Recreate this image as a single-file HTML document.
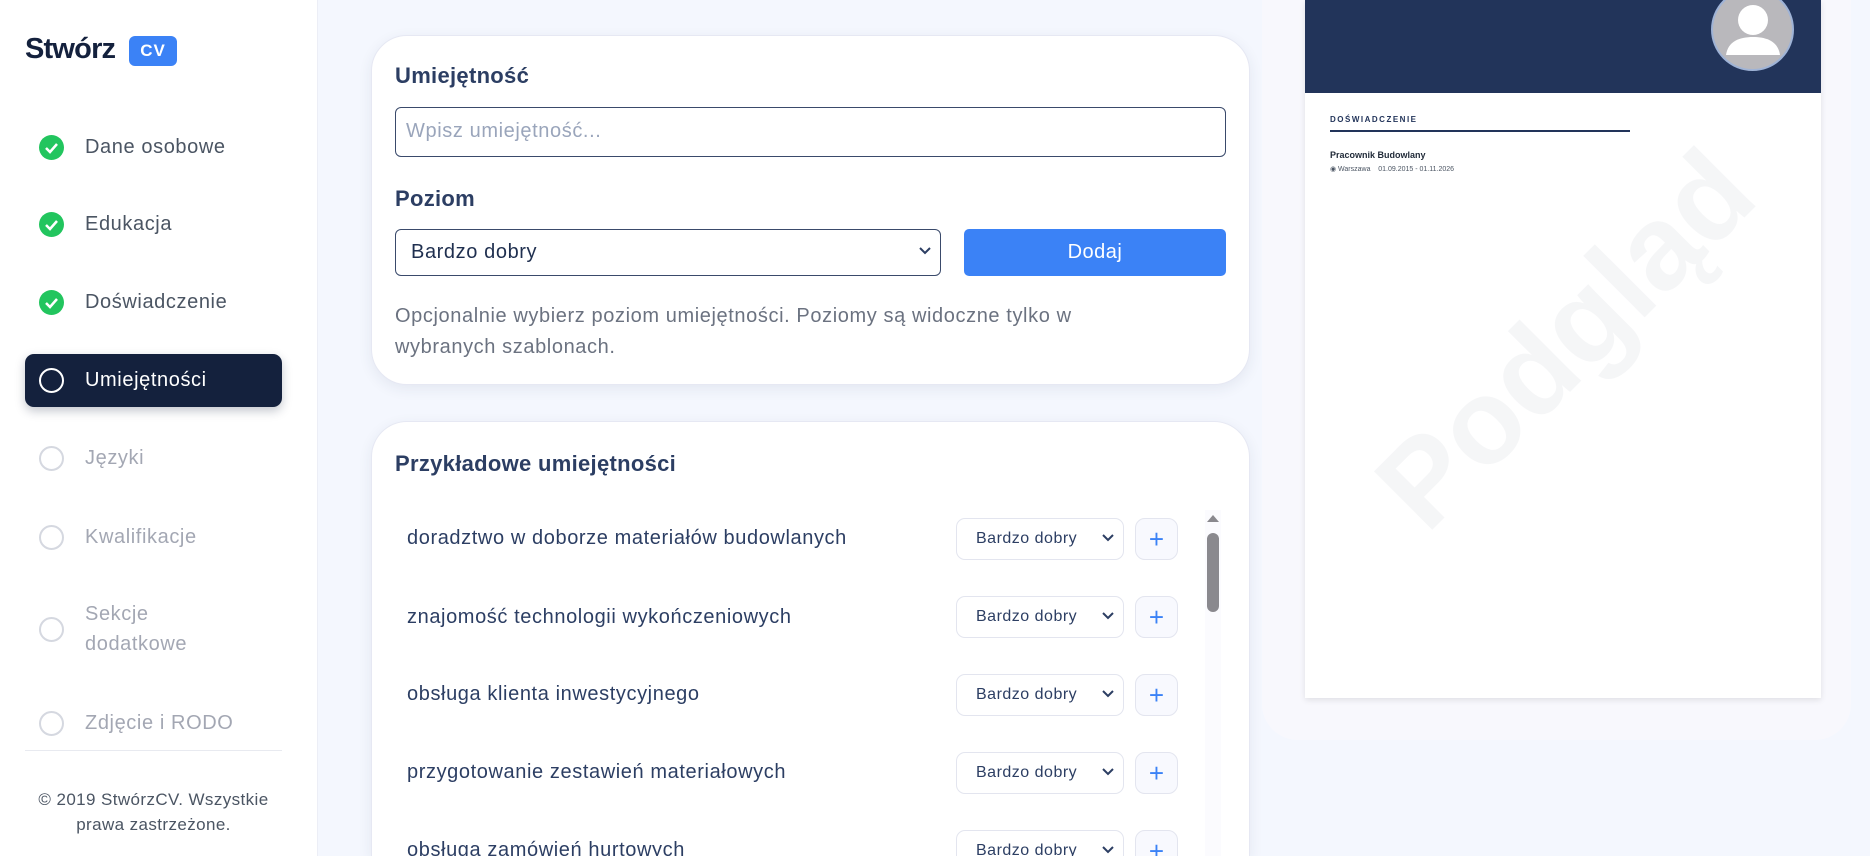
<!DOCTYPE html>
<html style="overflow:hidden;width:1870px;height:856px"><head><meta charset="utf-8"><style>
*{box-sizing:border-box;margin:0;padding:0}
html,body{width:1870px;height:856px;overflow:hidden}
body{background:#f4f7fe;font-family:"Liberation Sans","DejaVu Sans",sans-serif;color:#2c3e63}
#wrap{position:relative;width:1870px;height:856px;overflow:hidden}
.abs{position:absolute}
#side{left:0;top:0;width:318px;height:856px;background:#fff;border-right:1px solid #eceef6}
.logo{left:25px;top:33px;font-size:29px;font-weight:bold;color:#14213d;letter-spacing:-0.8px}
.cv{left:129px;top:36px;width:48px;height:30px;background:#3b82f6;border-radius:6px;color:#fff;font-weight:bold;font-size:17px;text-align:center;line-height:30px;letter-spacing:1px}
.nav{left:85px;font-size:20px;color:#4b5563;line-height:30px;letter-spacing:0.6px}
.nav.dis{color:#a3a7b3}
.ic{left:39px;width:25px;height:25px;border-radius:50%}
.ok{background:#22c55e}
.emp{border:2px solid #d5d8e0}
.active{left:25px;top:354px;width:257px;height:53px;background:#14213d;border-radius:9px;box-shadow:0 4px 10px rgba(20,33,61,.25)}
.card{background:#fff;border:1px solid #e6e8f3;border-radius:36px;box-shadow:0 4px 14px rgba(40,50,90,.08)}
.lbl{font-size:22px;font-weight:bold;color:#2c3e63;letter-spacing:0.3px}
.inp{border:1.5px solid #3a4a6b;border-radius:6px;background:#fff}
.row{left:407px;font-size:20px;color:#2c3e63;letter-spacing:0.6px}
.sel{left:956px;width:168px;height:42px;border:1px solid #e3e5ef;border-radius:9px;background:#fff;font-size:16px;color:#2c3e63;padding-left:19px;line-height:40px;letter-spacing:0.5px}
.plus{left:1135px;width:43px;height:42px;border:1px solid #e3e5ef;border-radius:10px;background:#f8f9fe;color:#3b82f6;font-size:26px;text-align:center;line-height:40px}
.chev{position:absolute;right:8px;top:14px}
</style></head><body><div id="wrap">
<div id="side" class="abs"></div>
<div class="abs logo">Stwórz</div>
<div class="abs cv">CV</div>

<div class="abs ic ok" style="top:135px"><svg width="25" height="25"><path d="M7 13l4 4 7-8" stroke="#fff" stroke-width="2.5" fill="none"/></svg></div>
<div class="abs nav" style="top:132px">Dane osobowe</div>
<div class="abs ic ok" style="top:212px"><svg width="25" height="25"><path d="M7 13l4 4 7-8" stroke="#fff" stroke-width="2.5" fill="none"/></svg></div>
<div class="abs nav" style="top:209px">Edukacja</div>
<div class="abs ic ok" style="top:290px"><svg width="25" height="25"><path d="M7 13l4 4 7-8" stroke="#fff" stroke-width="2.5" fill="none"/></svg></div>
<div class="abs nav" style="top:287px">Doświadczenie</div>
<div class="abs active"></div>
<div class="abs ic" style="top:368px;border:2.5px solid #fff"></div>
<div class="abs nav" style="top:365px;color:#fff">Umiejętności</div>
<div class="abs ic emp" style="top:446px"></div>
<div class="abs nav dis" style="top:443px">Języki</div>
<div class="abs ic emp" style="top:525px"></div>
<div class="abs nav dis" style="top:522px">Kwalifikacje</div>
<div class="abs ic emp" style="top:617px"></div>
<div class="abs nav dis" style="top:599px">Sekcje</div>
<div class="abs nav dis" style="top:629px">dodatkowe</div>
<div class="abs ic emp" style="top:711px"></div>
<div class="abs nav dis" style="top:708px">Zdjęcie i RODO</div>
<div class="abs" style="left:25px;top:750px;width:257px;height:1px;background:#e8eaf0"></div>
<div class="abs" style="left:25px;top:787px;width:257px;text-align:center;font-size:17px;line-height:25px;color:#4b5563;letter-spacing:0.4px">© 2019 StwórzCV. Wszystkie prawa zastrzeżone.</div>

<div class="abs card" style="left:371px;top:35px;width:879px;height:350px"></div>
<div class="abs lbl" style="left:395px;top:63px">Umiejętność</div>
<div class="abs inp" style="left:395px;top:107px;width:831px;height:50px"></div>
<div class="abs" style="left:406px;top:120px;font-size:20px;color:#9aa5bb;letter-spacing:0.6px">Wpisz umiejętność...</div>
<div class="abs lbl" style="left:395px;top:186px">Poziom</div>
<div class="abs inp" style="left:395px;top:229px;width:546px;height:47px"></div>
<div class="abs" style="left:411px;top:241px;font-size:20px;color:#1f2f4f;letter-spacing:0.6px">Bardzo dobry</div>
<svg class="abs" style="left:918px;top:246px" width="14" height="10"><path d="M2 2l5 5 5-5" stroke="#2c3e63" stroke-width="2" fill="none"/></svg>
<div class="abs" style="left:964px;top:229px;width:262px;height:47px;background:#3b82f6;border-radius:5px;color:#fff;font-size:20px;text-align:center;line-height:47px;letter-spacing:0.5px">Dodaj</div>
<div class="abs" style="left:395px;top:301px;width:780px;font-size:20px;line-height:31px;color:#6b7280;letter-spacing:0.6px">Opcjonalnie wybierz poziom umiejętności. Poziomy są widoczne tylko w wybranych szablonach.</div>

<div class="abs card" style="left:371px;top:421px;width:879px;height:435px;border-radius:36px 36px 0 0;border-bottom:none"></div>
<div class="abs lbl" style="left:395px;top:451px">Przykładowe umiejętności</div>
<div class="abs" style="left:1205px;top:510px;width:16px;height:346px;background:#fbfbfe"></div>
<svg class="abs" style="left:1206px;top:513px" width="14" height="10"><path d="M1 9L7 2l6 7z" fill="#8a898e"/></svg>
<div class="abs" style="left:1207px;top:533px;width:12px;height:79px;background:#8a898e;border-radius:6px"></div>

<div class="abs row" style="top:527px">doradztwo w doborze materiałów budowlanych</div>
<div class="abs sel" style="top:518px">Bardzo dobry<svg class="chev" width="14" height="10"><path d="M2 2l5 5 5-5" stroke="#2c3e63" stroke-width="2" fill="none"/></svg></div>
<div class="abs plus" style="top:518px">+</div>
<div class="abs row" style="top:606px">znajomość technologii wykończeniowych</div>
<div class="abs sel" style="top:596px">Bardzo dobry<svg class="chev" width="14" height="10"><path d="M2 2l5 5 5-5" stroke="#2c3e63" stroke-width="2" fill="none"/></svg></div>
<div class="abs plus" style="top:596px">+</div>
<div class="abs row" style="top:683px">obsługa klienta inwestycyjnego</div>
<div class="abs sel" style="top:674px">Bardzo dobry<svg class="chev" width="14" height="10"><path d="M2 2l5 5 5-5" stroke="#2c3e63" stroke-width="2" fill="none"/></svg></div>
<div class="abs plus" style="top:674px">+</div>
<div class="abs row" style="top:761px">przygotowanie zestawień materiałowych</div>
<div class="abs sel" style="top:752px">Bardzo dobry<svg class="chev" width="14" height="10"><path d="M2 2l5 5 5-5" stroke="#2c3e63" stroke-width="2" fill="none"/></svg></div>
<div class="abs plus" style="top:752px">+</div>
<div class="abs" style="left:371px;top:826px;width:879px;height:30px;overflow:hidden">
<div class="abs row" style="left:36px;top:13px">obsługa zamówień hurtowych</div>
<div class="abs sel" style="left:585px;top:4px">Bardzo dobry<svg class="chev" width="14" height="10"><path d="M2 2l5 5 5-5" stroke="#2c3e63" stroke-width="2" fill="none"/></svg></div>
<div class="abs plus" style="left:764px;top:4px">+</div>
</div>

<div class="abs" style="left:1262px;top:-40px;width:589px;height:780px;background:#f8f8fd;border-radius:36px"></div>
<div class="abs" style="left:1305px;top:0;width:516px;height:698px;background:#fff;box-shadow:0 2px 6px rgba(0,0,0,.1);overflow:hidden">
  <div class="abs" style="left:0;top:0;width:516px;height:93px;background:#22345a"></div>
  <div class="abs" style="left:406px;top:-12px;width:83px;height:83px;border-radius:50%;background:#b9b8bc;border:2px solid #9fb3d6;overflow:hidden">
    <svg width="83" height="83"><circle cx="40" cy="30" r="15" fill="#fff"/><path d="M13 65c2-14 14-18 27-18s25 4 27 18z" fill="#fff"/></svg>
  </div>
  <div class="abs" style="left:25px;top:115px;font-size:8px;font-weight:bold;letter-spacing:1.5px;color:#22345a">DOŚWIADCZENIE</div>
  <div class="abs" style="left:25px;top:130px;width:300px;height:1.5px;background:#22345a"></div>
  <div class="abs" style="left:25px;top:150px;font-size:9px;font-weight:bold;color:#1f2937">Pracownik Budowlany</div>
  <div class="abs" style="left:25px;top:165px;font-size:7px;color:#4b5563">◉ Warszawa &nbsp;&nbsp; 01.09.2015 - 01.11.2026</div>
  <div class="abs" style="left:0px;top:270px;width:520px;text-align:center;font-size:120px;font-weight:bold;color:#22345a;opacity:.04;transform:rotate(-45deg)">Podgląd</div>
</div>
</div></body></html>
